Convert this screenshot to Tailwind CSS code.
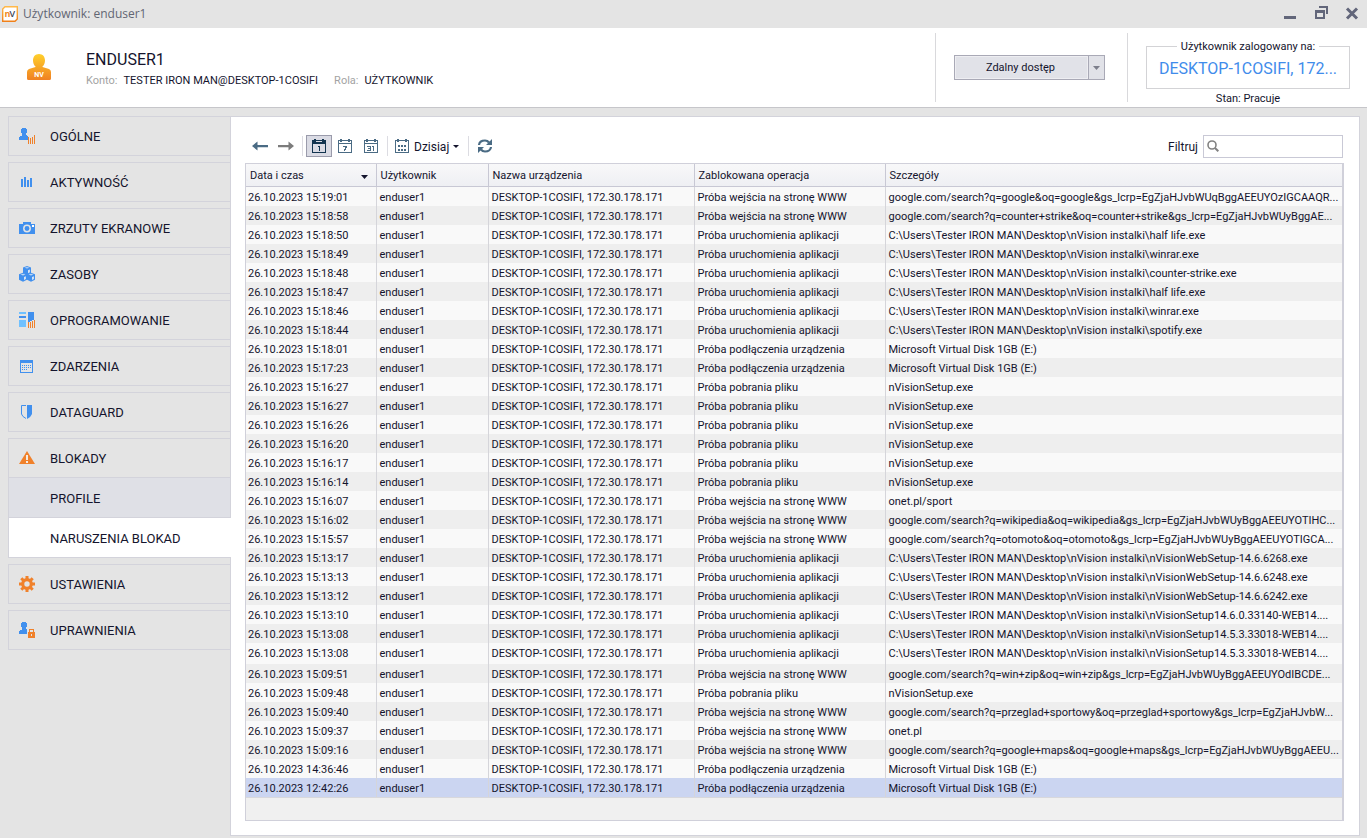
<!DOCTYPE html>
<html lang="pl">
<head>
<meta charset="utf-8">
<title>Użytkownik: enduser1</title>
<script src="https://cdn.jsdelivr.net/npm/@tailwindcss/browser@4"></script>
</head>
<body class="flex min-h-screen flex-col bg-[#e4e4e4] font-['Roboto','Noto_Sans',sans-serif] text-[11px] text-[#14142d]">

<div class="flex h-7 shrink-0 items-center pr-[7px] pl-0.5 font-['Open_Sans','Noto_Sans',sans-serif] text-xs text-[#626673]">
  <svg class="size-4" viewBox="0 0 16 16" aria-hidden="true">
    <defs><linearGradient id="logo" x1="0" y1="0" x2="0" y2="1"><stop offset="0" stop-color="#ffb94a"/><stop offset="1" stop-color="#f08019"/></linearGradient></defs>
    <path d="M3 .7H15.3V13L13 15.3H.7V3Z" fill="#fff" stroke="url(#logo)" stroke-width="1.4"/>
    <text x="2.500" y="11" font-size="9" font-weight="700" fill="#f08a22">n</text>
    <text x="7.500" y="11" font-size="9" font-weight="600" fill="#3b4254">V</text>
  </svg>
  <h1 class="ml-[5px] flex-1 pb-px">Użytkownik: enduser1</h1>
  <div class="flex gap-4 pb-0.5">
    <button aria-label="Minimalizuj" class="size-4"><svg viewBox="0 0 16 16" shape-rendering="crispEdges"><path d="M4 11h12v3H4z" fill="#62667a"/></svg></button>
    <button aria-label="Przywróć" class="size-4"><svg viewBox="0 0 16 16" shape-rendering="crispEdges" fill="#62667a"><path d="M7 1h9v8h-2V3H7z"/><path d="M3 5h10v9H3zM5 8v4h6V8z" fill-rule="evenodd"/></svg></button>
    <button aria-label="Zamknij" class="size-4"><svg viewBox="0 0 16 16"><path d="M3 3.500L13 13.500M13 3.500L3 13.500" stroke="#62667a" stroke-width="3"/></svg></button>
  </div>
</div>

<header class="flex h-20 shrink-0 items-stretch border-b border-[#c6c6ca] bg-white">
  <div class="flex flex-1 items-start">
    <svg class="mt-[26px] ml-[27px] h-[26px] w-6" viewBox="0 0 24 26" aria-hidden="true">
      <defs><linearGradient id="person" x1="0" y1="0" x2="0" y2="1"><stop offset="0" stop-color="#ffd02c"/><stop offset="1" stop-color="#f08122"/></linearGradient></defs>
      <path d="M12 0C15.800 0 18 2.800 18 6.500C18 9 17 11.300 15.500 12.500V13L22 15Q24 16 24 18V24.500Q24 26 22.500 26H1.500Q0 26 0 24.500V18Q0 16 2 15L8.500 13V12.500C7 11.300 6 9 6 6.500C6 2.800 8.200 0 12 0Z" fill="url(#person)"/>
      <text x="12" y="23" text-anchor="middle" font-size="7" font-weight="700" fill="#fff">NV</text>
    </svg>
    <div class="mt-[22px] ml-[35px]">
      <h2 class="text-base leading-5">ENDUSER1</h2>
      <p class="mt-[3px] flex gap-1.5 leading-4"><span class="text-[#a3a3a3]">Konto:</span><span>TESTER IRON MAN@DESKTOP-1COSIFI</span><span class="ml-2.5 text-[#a3a3a3]">Rola:</span><span>UŻYTKOWNIK</span></p>
    </div>
  </div>
  <div class="my-[5px] flex w-[193px] items-start border-x border-[#d9d9dc] pt-[22px] pl-[18px]">
    <div class="flex h-[25px] w-[151px] border border-[#a9a9b6] bg-[#e1e2e8]">
      <button class="flex-1 border border-[#eeeef2] pt-0.5 pr-0.5">Zdalny dostęp</button>
      <button aria-label="Więcej opcji" class="flex w-4 items-center justify-center border-l border-[#a9a9b6]"><svg class="h-1 w-[7px]" viewBox="0 0 7 4"><path d="M0 0h7L3.500 4z" fill="#7d7f8c"/></svg></button>
    </div>
  </div>
  <div class="flex w-[239px] flex-col pt-[11px] pr-[17px] pl-[18px] text-center">
    <fieldset class="h-[50px] min-w-0 border border-[#d3d3d6] px-[11px]">
      <legend class="mx-auto px-1 leading-[15px]">Użytkownik zalogowany na:</legend>
      <a href="#" class="block whitespace-nowrap pt-px text-base leading-7 text-[#3f8ceb]">DESKTOP-1COSIFI, 172...</a>
    </fieldset>
    <p class="mt-0.5 leading-4">Stan: Pracuje</p>
  </div>
</header>

<div class="flex flex-1 items-stretch pt-2 pr-[7px] pb-0.5 pl-2">
  <nav class="flex w-[222px] shrink-0 flex-col gap-1.5 text-[13px]">
    <a href="#" class="flex h-10 items-center gap-[15px] border-y border-l border-[#d3d3db] pl-2.5">
      <svg class="size-4" viewBox="0 0 16 16" shape-rendering="crispEdges"><path d="M3 0h4v1h1v4H7v2h1v1h1v4H0V9h1V8h2V5H2V1h1z" fill="#4190ee"/><path d="M9 9h1v7H9zM11 10h1v6h-1zM13 9h1v7h-1zM15 7h1v9h-1z" fill="#f0812b"/></svg><span class="pt-0.5">OGÓLNE</span></a>
    <a href="#" class="flex h-10 items-center gap-[15px] border-y border-l border-[#d3d3db] pl-2.5">
      <svg class="size-4" viewBox="0 0 16 16" shape-rendering="crispEdges"><path d="M2 5h2v8H2zM5 3h2v10H5zM8 6h2v7H8zM11 4h2v9h-2z" fill="#4190ee"/></svg><span class="pt-0.5">AKTYWNOŚĆ</span></a>
    <a href="#" class="flex h-10 items-center gap-[15px] border-y border-l border-[#d3d3db] pl-2.5">
      <svg class="size-4" viewBox="0 0 16 16"><path d="M0 4h4V2h8v2h4v10H0z" fill="#4190ee"/><circle cx="8" cy="8.500" r="3.200" fill="none" stroke="#e4e4e4" stroke-width="1.500"/><path d="M13 5h2v2h-2z" fill="#fff"/></svg><span class="pt-0.5">ZRZUTY EKRANOWE</span></a>
    <a href="#" class="flex h-10 items-center gap-[15px] border-y border-l border-[#d3d3db] pl-2.5">
      <svg class="size-4" viewBox="0 0 16 16"><g id="cube"><path d="M8 0L12 1.500V7L8 9L4 7V1.500Z" fill="#4190ee"/><path d="M5.500 1.700L8 .9L10.500 1.700L8 2.600Z" fill="#b9d5f5"/><path d="M9 4.200L10.900 3.400V6.200L9 7.200Z" fill="#d9e5f4"/></g><use href="#cube" x="-4" y="6.800"/><use href="#cube" x="4" y="6.800"/></svg><span class="pt-0.5">ZASOBY</span></a>
    <a href="#" class="flex h-10 items-center gap-[15px] border-y border-l border-[#d3d3db] pl-2.5">
      <svg class="size-4" viewBox="0 0 16 16" shape-rendering="crispEdges"><path d="M0 0h7v2H0zM0 8h7v7H0z" fill="#70c1ff"/><path d="M0 4h7v2H0zM9 0h6v8h-2v1h-2v1H9z" fill="#4190ee"/><path d="M9 10h1v6H9zM11 10h1v6h-1zM13 9h1v7h-1zM15 8h1v8h-1z" fill="#f0812b"/></svg><span class="pt-0.5">OPROGRAMOWANIE</span></a>
    <a href="#" class="flex h-10 items-center gap-[15px] border-y border-l border-[#d3d3db] pl-2.5">
      <svg class="size-4" viewBox="0 0 16 16" shape-rendering="crispEdges"><path d="M1 2h13v13H1zM2 5v9h11V5z" fill="#4190ee" fill-rule="evenodd"/><path d="M3 7.500h9M3 9.500h9M3 11.500h6" stroke="#4190ee" stroke-dasharray="1 1"/></svg><span class="pt-0.5">ZDARZENIA</span></a>
    <a href="#" class="flex h-10 items-center gap-[15px] border-y border-l border-[#d3d3db] pl-2.5">
      <svg class="size-4" viewBox="0 0 16 16"><path d="M7 1.500H2.500V10Q3 12.500 7 14.500" fill="none" stroke="#4190ee"/><path d="M8 1h5v9Q12 13 8 15z" fill="#4190ee"/></svg><span class="pt-0.5">DATAGUARD</span></a>
    <div>
      <a href="#" class="flex h-10 items-center gap-[15px] border-y border-l border-[#d3d3db] pl-2.5">
        <svg class="size-4" viewBox="0 0 16 16"><path d="M8 1L16 14H0z" fill="#f0812b"/><path d="M7 5h2v5H7zM7 11h2v2H7z" fill="#f5ece4"/></svg><span class="pt-0.5">BLOKADY</span></a>
      <a href="#" class="flex h-10 items-center border-b border-l border-[#d3d3db] bg-[#dfe0e6] pl-[41px]"><span class="pt-0.5">PROFILE</span></a>
      <a href="#" aria-current="page" class="relative z-10 -mr-px flex h-10 items-center border-b border-l border-[#d3d3db] bg-white pl-[41px]"><span class="pt-0.5">NARUSZENIA BLOKAD</span></a>
    </div>
    <a href="#" class="flex h-10 items-center gap-[15px] border-y border-l border-[#d3d3db] pl-2.5">
      <svg class="size-4" viewBox="0 0 16 16"><circle cx="8" cy="8" r="4.300" fill="none" stroke="#f0812b" stroke-width="3.200"/><path d="M8 0v3M8 13v3M0 8h3M13 8h3M2.300 2.300L4.500 4.500M11.500 11.500L13.700 13.700M2.300 13.700L4.500 11.500M11.500 4.500L13.700 2.300" stroke="#f0812b" stroke-width="3"/></svg><span class="pt-0.5">USTAWIENIA</span></a>
    <a href="#" class="flex h-10 items-center gap-[15px] border-y border-l border-[#d3d3db] pl-2.5">
      <svg class="size-4" viewBox="0 0 16 16" shape-rendering="crispEdges"><path d="M3 0h4v1h1v4H7v2h1v5H0V9h1V8h2V5H2V1h1z" fill="#4190ee"/><path d="M9 10h1V7h5v3h1v6H9zM11 8v2h3V8zM12 12v2h1v-2z" fill="#f0812b" fill-rule="evenodd"/></svg><span class="pt-0.5">UPRAWNIENIA</span></a>
  </nav>

  <main class="flex min-w-0 flex-1 flex-col border border-[#d3d3db] bg-white pt-[18px] pr-[15px] pb-3.5 pl-3.5">
    <div class="mb-[5px] flex h-[23px] shrink-0 items-center pb-px text-xs">
      <button aria-label="Wstecz" class="ml-[7px] h-4 w-4"><svg viewBox="0 0 16 16"><path d="M0 8L5.500 3.500V7H16V9.300H5.500V12.500Z" fill="#4a6b84"/></svg></button>
      <button aria-label="Dalej" class="ml-2.5 h-4 w-4"><svg viewBox="0 0 16 16"><path d="M16 8L10.500 3.500V7H0V9.300H10.500V12.500Z" fill="#7c7c7c"/></svg></button>
      <span class="ml-2 h-5 w-px bg-[#dcdce2]"></span>
      <button aria-label="Dzień" aria-pressed="true" class="ml-[3px] flex h-[22px] w-[26px] items-center justify-center border border-[#9a9bab] bg-[#dadbe4]">
        <svg class="size-4" viewBox="0 0 16 16" shape-rendering="crispEdges" fill="#12344f"><path d="M1 2h14v13H1zM2 6v8h12V6zM5 3v1h6V3z" fill-rule="evenodd"/><path d="M3 1h2v3H3zM11 1h2v3h-2zM7 8h2v5H8V9H7z"/></svg></button>
      <button aria-label="Tydzień" class="ml-[5px] size-4"><svg viewBox="0 0 16 16" shape-rendering="crispEdges" fill="#4a6b84"><path d="M1 2h14v13H1zM2 6v8h12V6zM2 3v2h12V3z" fill-rule="evenodd"/><path d="M3 1h2v3H3zM11 1h2v3h-2zM6 8h4v2H9v2H8v1H7v-2h1V9H6z"/></svg></button>
      <button aria-label="Miesiąc" class="ml-2.5 size-4"><svg viewBox="0 0 16 16" shape-rendering="crispEdges" fill="#4a6b84"><path d="M1 2h14v13H1zM2 6v8h12V6zM2 3v2h12V3z" fill-rule="evenodd"/><path d="M3 1h2v3H3zM11 1h2v3h-2zM4 8h4v5H4v-1h3v-1H5v-1h2V9H4zM9 8h2v5h-1V9H9z"/></svg></button>
      <span class="ml-2 h-5 w-px bg-[#dcdce2]"></span>
      <button class="ml-1.5 flex items-center"><svg class="size-4" viewBox="0 0 16 16" shape-rendering="crispEdges" fill="#4a6b84"><path d="M1 2h14v13H1zM2 3v11h12V3z" fill-rule="evenodd"/><path d="M3 1h2v3H3zM11 1h2v3h-2zM4 7h2v2H4zM7 7h2v2H7zM10 7h2v2h-2zM4 11h2v2H4zM7 11h2v2H7zM10 11h2v2h-2z"/></svg><span class="ml-1 pt-px">Dzisiaj</span>
        <svg class="ml-1 h-[3px] w-1.5" viewBox="0 0 6 3"><path d="M0 0h6L3 3z" fill="#14142d"/></svg></button>
      <span class="ml-[9px] h-5 w-px bg-[#dcdce2]"></span>
      <button aria-label="Odśwież" class="ml-2 size-4"><svg viewBox="0 0 16 16"><path d="M2 7Q2.500 2.500 8 2.500Q10.500 2.500 12 4.500M14 9Q13.500 13.500 8 13.500Q5.500 13.500 4 11.500" fill="none" stroke="#4a6b84" stroke-width="2.200"/><path d="M15 1v6H9zM1 15V9h6z" fill="#4a6b84"/></svg></button>
      <label for="filter" class="ml-auto pt-px">Filtruj</label>
      <div class="ml-[5px] mr-px flex h-[23px] w-[140px] items-center border border-[#c9c9d6] pl-[3px]">
        <svg class="size-3 shrink-0" viewBox="0 0 12 12" fill="none" stroke="#828282"><circle cx="5" cy="5" r="4" stroke-width="1.600"/><path d="M8 8L11.300 11.300" stroke-width="2"/></svg>
        <input id="filter" type="text" class="h-full min-w-0 flex-1 px-1 outline-none">
      </div>
    </div>

    <div class="flex-1 overflow-hidden border border-r-2 border-[#d0d0da] bg-[#f0f0f0]">
      <table class="w-full table-fixed border-collapse text-left">
        <colgroup><col class="w-[130px]"><col class="w-[112px]"><col class="w-[206px]"><col class="w-[191px]"><col></colgroup>
        <thead>
          <tr class="h-[23px] bg-linear-to-b from-[#f8f8f9] to-[#eeeff3] shadow-[inset_0_-1px_0_#c8c8d4]">
            <th aria-sort="descending" class="border-r border-[#c8c8d4] pt-0.5 pr-2 pb-0 pl-1 font-normal"><span class="flex items-center justify-between">Data i czas<svg class="h-1 w-[7px]" viewBox="0 0 7 4"><path d="M0 0h7L3.500 4z" fill="#14142d"/></svg></span></th>
            <th class="border-r border-[#c8c8d4] px-1 pt-0.5 pb-0 font-normal">Użytkownik</th>
            <th class="border-r border-[#c8c8d4] px-1 pt-0.5 pb-0 font-normal">Nazwa urządzenia</th>
            <th class="border-r border-[#c8c8d4] px-1 pt-0.5 pb-0 font-normal">Zablokowana operacja</th>
            <th class="px-1 pt-0.5 pb-0 font-normal">Szczegóły</th>
          </tr>
        </thead>
        <tbody id="rows"></tbody>
      </table>
      <div class="h-px bg-[#d8d8dc]"></div>
    </div>
  </main>
</div>

<script>
const operations = {
  w: 'Próba wejścia na stronę WWW',
  a: 'Próba uruchomienia aplikacji',
  u: 'Próba podłączenia urządzenia',
  p: 'Próba pobrania pliku'
};
const dir = 'C:\\Users\\Tester IRON MAN\\Desktop\\nVision instalki\\';
const disk = 'Microsoft Virtual Disk 1GB (E:)';
const setup = 'nVisionSetup.exe';
const events = [
  ['15:19:01', 'w', 'google.com/search?q=google&oq=google&gs_lcrp=EgZjaHJvbWUqBggAEEUYOzIGCAAQR...'],
  ['15:18:58', 'w', 'google.com/search?q=counter+strike&oq=counter+strike&gs_lcrp=EgZjaHJvbWUyBggAE...'],
  ['15:18:50', 'a', dir + 'half life.exe'],
  ['15:18:49', 'a', dir + 'winrar.exe'],
  ['15:18:48', 'a', dir + 'counter-strike.exe'],
  ['15:18:47', 'a', dir + 'half life.exe'],
  ['15:18:46', 'a', dir + 'winrar.exe'],
  ['15:18:44', 'a', dir + 'spotify.exe'],
  ['15:18:01', 'u', disk],
  ['15:17:23', 'u', disk],
  ['15:16:27', 'p', setup],
  ['15:16:27', 'p', setup],
  ['15:16:26', 'p', setup],
  ['15:16:20', 'p', setup],
  ['15:16:17', 'p', setup],
  ['15:16:14', 'p', setup],
  ['15:16:07', 'w', 'onet.pl/sport'],
  ['15:16:02', 'w', 'google.com/search?q=wikipedia&oq=wikipedia&gs_lcrp=EgZjaHJvbWUyBggAEEUYOTIHC...'],
  ['15:15:57', 'w', 'google.com/search?q=otomoto&oq=otomoto&gs_lcrp=EgZjaHJvbWUyBggAEEUYOTIGCA...'],
  ['15:13:17', 'a', dir + 'nVisionWebSetup-14.6.6268.exe'],
  ['15:13:13', 'a', dir + 'nVisionWebSetup-14.6.6248.exe'],
  ['15:13:12', 'a', dir + 'nVisionWebSetup-14.6.6242.exe'],
  ['15:13:10', 'a', dir + 'nVisionSetup14.6.0.33140-WEB14....'],
  ['15:13:08', 'a', dir + 'nVisionSetup14.5.3.33018-WEB14....'],
  ['15:13:08', 'a', dir + 'nVisionSetup14.5.3.33018-WEB14....'],
  ['15:09:51', 'w', 'google.com/search?q=win+zip&oq=win+zip&gs_lcrp=EgZjaHJvbWUyBggAEEUYOdIBCDE...'],
  ['15:09:48', 'p', setup],
  ['15:09:40', 'w', 'google.com/search?q=przeglad+sportowy&oq=przeglad+sportowy&gs_lcrp=EgZjaHJvbW...'],
  ['15:09:37', 'w', 'onet.pl'],
  ['15:09:16', 'w', 'google.com/search?q=google+maps&oq=google+maps&gs_lcrp=EgZjaHJvbWUyBggAEEU...'],
  ['14:36:46', 'u', disk],
  ['12:42:26', 'u', disk]
];
const body = document.getElementById('rows');
events.forEach(([time, op, details], i) => {
  const last = i === events.length - 1;
  const tr = document.createElement('tr');
  tr.className = last ? 'h-[19px] bg-[#cbd5f1]' : i === 24 ? 'h-[21px] bg-[#f9f9f9]' : i % 2 ? 'h-[19px] bg-[#eeeeee]' : 'h-[19px] bg-[#f9f9f9]';
  if (last) tr.setAttribute('aria-selected', 'true');
  ['26.10.2023 ' + time, 'enduser1', 'DESKTOP-1COSIFI, 172.30.178.171', operations[op], details].forEach((text, c) => {
    const td = document.createElement('td');
    td.className = 'overflow-hidden whitespace-nowrap pt-0.5 pb-0 leading-[17px] align-top ' + (c === 0 ? 'pl-0.5 border-r border-[#d5d5da]' : c === 4 ? 'pl-[3px]' : 'pl-[3px] border-r border-[#d5d5da]');
    td.textContent = text;
    tr.append(td);
  });
  body.append(tr);
});
</script>
</body>
</html>
